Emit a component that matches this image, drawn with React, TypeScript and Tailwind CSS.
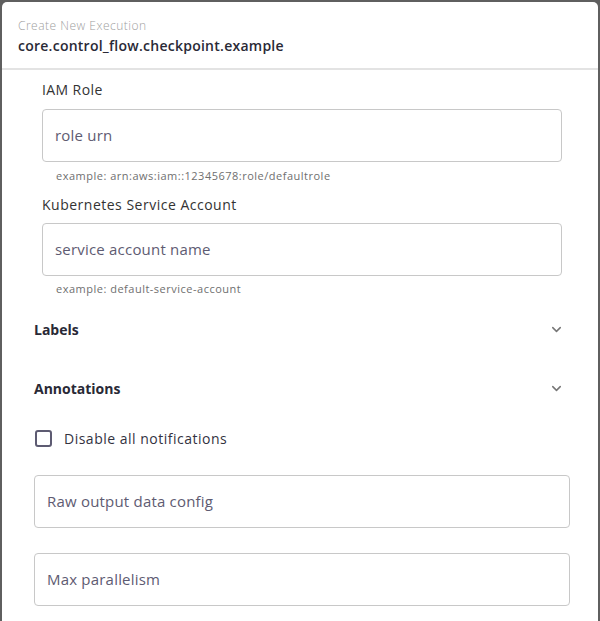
import { ChevronDown } from 'lucide-react';

// ── Pieces ────────────────────────────────────────────────────────────────────

function TextField({ placeholder, className = '' }: { placeholder: string; className?: string }) {
  return (
    <div
      className={`h-[53px] rounded-[4px] border border-[#c8c8c8] flex items-center px-[12px] text-[15px] tracking-[0.2px] text-[#5e5b72] ${className}`}
    >
      {placeholder}
    </div>
  );
}

function Accordion({ title }: { title: string }) {
  return (
    <div className="flex items-center justify-between h-[20px] pl-[32px] pr-[34px]">
      <span className="font-bold text-[14px] text-[#292936]">{title}</span>
      <ChevronDown size={15} strokeWidth={2.4} className="text-[#767676]" />
    </div>
  );
}

// ── App ───────────────────────────────────────────────────────────────────────

export default function App() {
  return (
    <div className="w-[600px] h-[621px] bg-[#5f5f5f] pt-[2px] pl-[2px] pr-[2px] overflow-hidden font-['Open_Sans',sans-serif]">
      <div className="h-[640px] bg-white rounded-t-[5px]">
        {/* Header */}
        <div className="h-[68px] border-b-2 border-[#e3e3e3] pl-[16px] pt-[16px]">
          <div className="text-[12px] leading-[16px] tracking-[0.5px] text-[#a0a0a0] font-light">
            Create New Execution
          </div>
          <div className="text-[14px] leading-[20px] mt-[2px] tracking-[0.25px] font-semibold text-[#292936]">
            core.control_flow.checkpoint.example
          </div>
        </div>

        {/* IAM / service account */}
        <div className="pl-[40px] pr-[36px] pt-[11px]">
          <div className="text-[14px] leading-[18px] tracking-[0.4px] text-[#333]">IAM Role</div>
          <TextField placeholder="role urn" className="mt-[10px]" />
          <div className="text-[11px] leading-[14px] tracking-[0.5px] text-[#6f6f6f] mt-[7px] ml-[14px]">
            example: arn:aws:iam::12345678:role/defaultrole
          </div>
          <div className="text-[14px] leading-[18px] tracking-[0.5px] text-[#333] mt-[13px]">
            Kubernetes Service Account
          </div>
          <div className="mt-[9px]">
            <TextField placeholder="service account name" />
          </div>
          <div className="text-[11px] leading-[14px] tracking-[0.5px] text-[#6f6f6f] mt-[6px] ml-[14px]">
            example: default-service-account
          </div>
        </div>

        <div className="mt-[23px] flex flex-col gap-[39px]">
          <Accordion title="Labels" />
          <Accordion title="Annotations" />
        </div>

        {/* Notifications */}
        <div className="flex items-center pl-[33px] mt-[30px] h-[20px]">
          <div className="w-[17px] h-[17px] rounded-[3px] border-2 border-[#5d5b72]" />
          <span className="ml-[12px] text-[14px] tracking-[0.5px] text-[#33323f]">Disable all notifications</span>
        </div>

        <div className="pl-[32px] pr-[28px] mt-[27px] flex flex-col gap-[25px]">
          <TextField placeholder="Raw output data config" />
          <TextField placeholder="Max parallelism" />
        </div>
      </div>
    </div>
  );
}
